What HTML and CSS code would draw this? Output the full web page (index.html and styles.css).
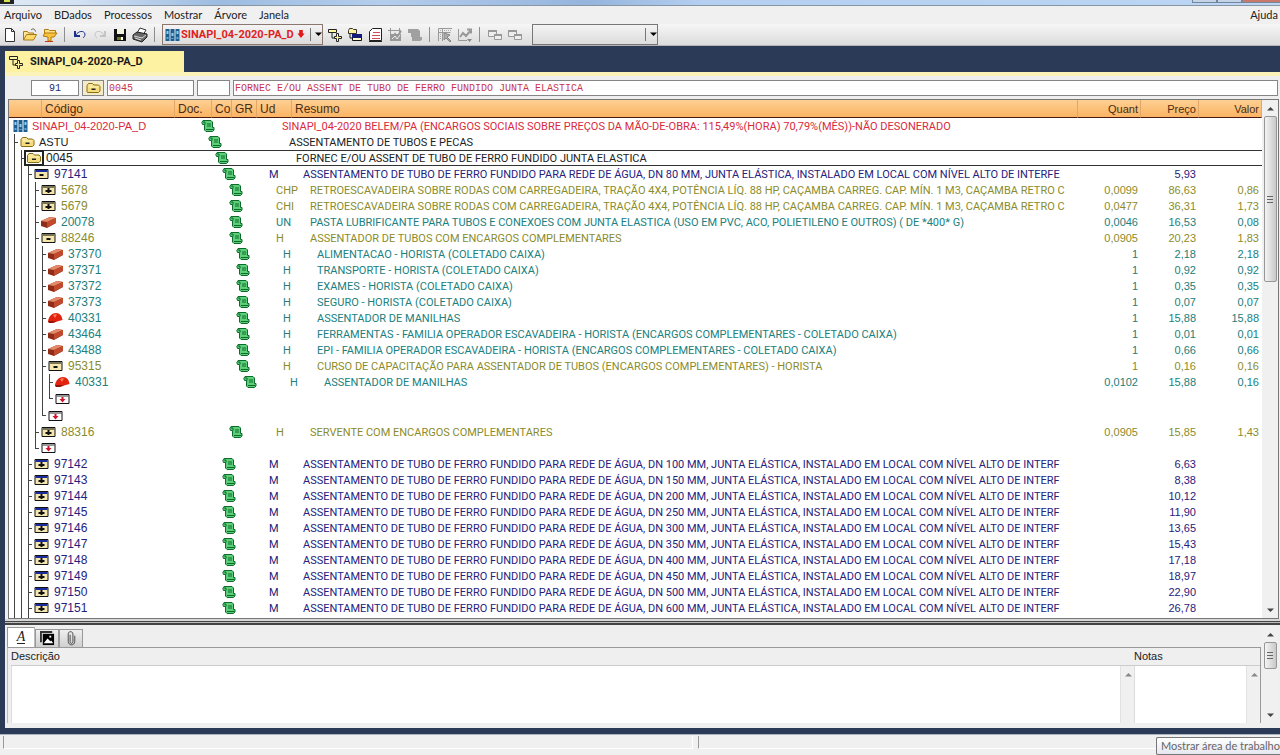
FILE: index.html
```html
<!DOCTYPE html>
<html lang="pt">
<head>
<meta charset="utf-8">
<title>SINAPI_04-2020-PA_D</title>
<link rel="stylesheet" href="styles.css">
</head>
<body>
<svg class="defs" aria-hidden="true">
  <symbol id="books" viewBox="0 0 14 12"><path d="M0 0h4v12H0zM5 0h4v12H5zM10 0h4v12h-4z" fill="#1d5f92"/><path d="M1 2h2v3H1zM6 4h2v3H6zM11 2h2v3h-2z" fill="#8fd0ee"/><path d="M1 8h2v2H1zM6 9h2v1H6zM11 8h2v2h-2z" fill="#5fa9d2"/></symbol>
  <symbol id="folder" viewBox="0 0 14 12"><path d="M.5 10V3.500L2 1.500h4l1.500 1.500H12l1.500 1.500V9L12 10.500H1z" fill="#f5dc7c" stroke="#8a6d14"/><path d="M2 3h4M2 5h10" stroke="#fff6c4"/><path d="M5 6.500h4v1.500H5z" fill="#222"/></symbol>
  <symbol id="boxminus" viewBox="0 0 14 12"><path d="M.5 1.500h13v9H.5z" fill="#f5e6ae" stroke="#111"/><path d="M1 2h12v2H1z" fill="var(--cap)"/><path d="M5 6h4v2H5z" fill="#111"/></symbol>
  <symbol id="boxplus" viewBox="0 0 14 12"><path d="M.5 1.500h13v9H.5z" fill="#f5e6ae" stroke="#111"/><path d="M1 2h12v2H1z" fill="var(--cap)"/><path d="M4 6h2V4h2v2h2v2H8v1H6V8H4z" fill="#111"/></symbol>
  <symbol id="end" viewBox="0 0 14 12"><path d="M.5 1.500h13v9H.5z" fill="#fff" stroke="#111"/><path d="M1 3h12" stroke="#333"/><path d="M6 4h2v2h2L7 9.500 4 6h2z" fill="#d0142c"/></symbol>
  <symbol id="brick" viewBox="0 0 15 12"><path d="M0 5 9 1l6 1v5l-9 5-6-2z" fill="#8d2c17"/><path d="m0 5 9-4 6 1-9 4z" fill="#e58a68"/><path d="m6 6 9-4v5l-9 4.500z" fill="#c14a2c"/></symbol>
  <symbol id="helmet" viewBox="0 0 15 12"><path d="M0 9C1 4 4 1 8 1s6 3 6.500 7L9 9.500 5 11H1z" fill="#e3230f"/><path d="M0 9c2 0 6 0 9 .5L4 11H1z" fill="#8d1508"/><path d="M5 3c1-1 3-1 4-.5L7 6z" fill="#ff7a5c"/></symbol>
  <symbol id="scroll" viewBox="0 0 14 13"><path d="M2 1h8l1.500 1.500V8H13v2.500L11.500 12H5L3.500 10.500V5H1.500L.8 3z" fill="#5ccf78" stroke="#0b6b2c"/><path d="M2 2.500h2V5M5 10h7.500M6 4.500h4M6 6.500h4" fill="none" stroke="#0b6b2c"/></symbol>
  <symbol id="link" viewBox="0 0 16 16"><path d="M1.500 2.500h8v3h-8z" fill="#fff6a0" stroke="#222"/><path d="M5 6v5h4" fill="none" stroke="#222"/><path d="M9.500 6.500h2v3h3v2h-3v3h-2v-3h-2v-2h2z" fill="#fff6a0" stroke="#222"/></symbol>
  <symbol id="windows" viewBox="0 0 16 16"><path d="M1.500 3.500h8v6h-8z" fill="#eee" stroke="#999"/><path d="M1 4h9" stroke="#999" stroke-width="2"/><path d="M7.500 7.500h7v5h-7z" fill="#eee" stroke="#999"/><path d="M7 8h8" stroke="#999" stroke-width="2"/></symbol>
  <symbol id="up" viewBox="0 0 7 5"><path d="M0 4.500h7L3.500 1z" fill="currentColor"/></symbol>
  <symbol id="down" viewBox="0 0 7 5"><path d="M0 .5h7L3.500 4z" fill="currentColor"/></symbol>
</svg>

<header class="titlebar"><svg class="appicon" viewBox="0 0 14 4"><path d="M0 0h14v4H0z" fill="#222"/><path d="M4 0h6v2H4z" fill="#d7e04e"/></svg><span class="winbtns"><i></i><i></i><i class="close"></i></span></header>
<nav class="menu">
  <button>Arquivo</button><button>BDados</button><button>Processos</button><button>Mostrar</button><button>Árvore</button><button>Janela</button><button class="help">Ajuda</button>
</nav>
<div class="toolbar">
  <button aria-label="Novo"><svg viewBox="0 0 16 16"><path d="M3.500 1.500h6l3 3v10h-9z" fill="#fff" stroke="#333"/><path d="M9.500 1.500v3h3" fill="none" stroke="#333"/></svg></button>
  <button aria-label="Abrir"><svg viewBox="0 0 16 16"><path d="M1.500 13V4.500h4l1 1.500h5v2" fill="#fbe69a" stroke="#a87b12"/><path d="m1.500 13 3-5.500h10l-3 5.500z" fill="#fbd96a" stroke="#a87b12"/><path d="M9 3c2-2 4-1 4.500 1.500" fill="none" stroke="#555"/></svg></button>
  <button aria-label="Mover"><svg viewBox="0 0 16 16"><path d="M2.500 8V2.500h4l1 1h6V8z" fill="#fbe38a" stroke="#b5790e"/><path d="m1 9 2-3h12l-3 4H9v4H6v-4z" fill="#f9c43c" stroke="#b5790e"/><path d="M3 14.500h8" stroke="#c23a17"/></svg></button>
  <span class="sep"></span>
  <button aria-label="Desfazer"><svg viewBox="0 0 16 16"><path d="M3 4v5h5" fill="none" stroke="#1d2f8c" stroke-width="2"/><path d="M4 8c2-4 8-5 9-1 0 2-1 3-2 4" fill="none" stroke="#1d2f8c"/></svg></button>
  <button aria-label="Refazer"><svg viewBox="0 0 16 16"><path d="M13 4v5H8" fill="none" stroke="#c4c4c4" stroke-width="2"/><path d="M12 8C10 4 4 3 3 7c0 2 1 3 2 4" fill="none" stroke="#c4c4c4"/></svg></button>
  <button aria-label="Guardar"><svg viewBox="0 0 16 16"><path d="M2 2h12v12H2z" fill="#111"/><path d="M5 2h7v5H5z" fill="#f2f4e0"/><path d="M5 10h6v3H5z" fill="#6d7630"/><path d="M9 10h2v3H9z" fill="#fff"/></svg></button>
  <button aria-label="Imprimir"><svg viewBox="0 0 16 16"><path d="m5 6 3-5 6 2-3 5z" fill="#fff" stroke="#333"/><path d="m1 8 4-3 10 2v3l-5 5-9-3z" fill="#666" stroke="#222"/><path d="m2 9 8 2 4-3M3 11l6 2" fill="none" stroke="#ddd"/></svg></button>
  <span class="sep"></span>
  <div class="combo project"><svg class="ic"><use href="#books"/></svg><select aria-label="Projeto"><option>SINAPI_04-2020-PA_D</option></select><svg class="pin" viewBox="0 0 8 10"><path d="M2 0h4v4h2L4 9 0 4h2z" fill="#e01818"/></svg><svg class="caret"><use href="#down"/></svg></div>
  <button aria-label="Conceito"><svg><use href="#link"/></svg></button>
  <button aria-label="Janelas"><svg viewBox="0 0 16 16"><path d="M1.500 6.500v-3l1-2h3l1 1h3v4z" fill="#fff3a0" stroke="#333"/><path d="M3 7v4h2" fill="none" stroke="#222"/><path d="M5.500 7.500h9v6h-9z" fill="#fffbd0" stroke="#111"/><path d="M5 7h10v4H5z" fill="#141c78"/></svg></button>
  <button aria-label="Texto"><svg viewBox="0 0 16 16"><path d="M5.500 1.500h9v12h-12v-9z" fill="#fff" stroke="#222"/><path d="M6 5.500h7M5 8.500h8M5 11.500h8" stroke="#d04a5a"/><path d="M2 14.500h13" stroke="#222"/></svg></button>
  <button aria-label="Medições"><svg viewBox="0 0 16 16"><path d="M1 3.500h13M3.500 1v13M12.500 1v5" fill="none" stroke="#999"/><path d="M3 7h11v7H3z" fill="#999"/><path d="m5 11 3-4 2 3 4-6" fill="none" stroke="#999" stroke-width="2"/><path d="m5 12 3-3 2 3 3-4" fill="none" stroke="#eee"/></svg></button>
  <button aria-label="Pergaminho"><svg viewBox="0 0 16 16"><path d="M1 2h10l2 2v6h2v3l-2 1H5v-4H4V6H1z" fill="#a0a0a0"/></svg></button>
  <span class="sep"></span>
  <button aria-label="Selecionar"><svg viewBox="0 0 16 16"><path d="M1.500 14V1.500H15M1.500 5.500h12M5.500 2v12" fill="none" stroke="#999"/><path d="M3 3.500h11M3.500 7v6" stroke="#aaa" stroke-dasharray="1 1"/><path d="M7 6v7l2-2 4 4 1-1-4-4 3-2z" fill="#aaa" stroke="#888"/></svg></button>
  <button aria-label="Gráfico"><svg viewBox="0 0 16 16"><path d="M1.500 2v11.500H10" fill="none" stroke="#999"/><path d="m3 10 3-4 3 3 5-6M10 2.500h4v4" fill="none" stroke="#999" stroke-width="2"/><path d="M10 12h5l-2.500 3z" fill="#888"/></svg></button>
  <span class="sep"></span>
  <button aria-label="Copiar janela"><svg><use href="#windows"/></svg></button>
  <button aria-label="Colar janela"><svg><use href="#windows"/></svg></button>
  <div class="combo filter"><select aria-label="Filtro"><option></option></select><svg class="caret"><use href="#down"/></svg></div>
</div>

<main class="desk">
  <div class="doctabs"><button class="doctab"><svg><use href="#link"/></svg>SINAPI_04-2020-PA_D</button></div>
  <section class="doc">
    <form class="fields">
      <input class="f-num" aria-label="Linha" value="91">
      <button type="button" aria-label="Capítulo"><svg class="ic"><use href="#folder"/></svg></button>
      <input class="f-code" aria-label="Código" value="0045">
      <input class="f-unit" aria-label="Unidade" value="">
      <input class="f-desc" aria-label="Resumo" value="FORNEC E/OU ASSENT DE TUBO DE FERRO FUNDIDO JUNTA ELASTICA">
    </form>
    <div class="treepane">
      <div class="treeview">
      <table>
        <colgroup><col class="w-icon"><col class="w-code"><col class="w-doc"><col class="w-co"><col class="w-gr"><col class="w-ud"><col><col class="w-quant"><col class="w-price"><col class="w-value"></colgroup>
        <thead><tr><th></th><th>Código</th><th>Doc.</th><th>Co</th><th>GR</th><th>Ud</th><th>Resumo</th><th class="n">Quant</th><th class="n">Preço</th><th class="n">Valor</th></tr></thead>
        <tbody>
        <tr class="l0 red"><td colspan="2"><div class="node"><svg class="ic"><use href="#books"/></svg><b class="long">SINAPI_04-2020-PA_D</b></div></td><td colspan="3"><svg class="gr"><use href="#scroll"/></svg></td><td colspan="2"><i></i>SINAPI_04-2020 BELEM/PA (ENCARGOS SOCIAIS SOBRE PREÇOS DA MÃO-DE-OBRA: 115,49%(HORA) 70,79%(MÊS))-NÃO DESONERADO</td><td></td><td></td><td></td></tr>
        <tr class="l1 black"><td colspan="2"><div class="node"><svg class="ic"><use href="#folder"/></svg><b class="long">ASTU</b></div></td><td colspan="3"><svg class="gr"><use href="#scroll"/></svg></td><td colspan="2"><i></i>ASSENTAMENTO DE TUBOS E PECAS</td><td></td><td></td><td></td></tr>
        <tr class="l2 black selected"><td colspan="2"><div class="node"><svg class="ic"><use href="#folder"/></svg><b>0045</b></div></td><td colspan="3"><svg class="gr"><use href="#scroll"/></svg></td><td colspan="2"><i></i>FORNEC E/OU ASSENT DE TUBO DE FERRO FUNDIDO JUNTA ELASTICA</td><td></td><td></td><td></td></tr>
        <tr class="l3 blue"><td colspan="2"><div class="node"><svg class="ic"><use href="#boxminus"/></svg><b>97141</b></div></td><td colspan="3"><svg class="gr"><use href="#scroll"/></svg></td><td colspan="2"><i>M</i>ASSENTAMENTO DE TUBO DE FERRO FUNDIDO PARA REDE DE ÁGUA, DN 80 MM, JUNTA ELÁSTICA, INSTALADO EM LOCAL COM NÍVEL ALTO DE INTERFE</td><td></td><td>5,93</td><td></td></tr>
        <tr class="l4 olive"><td colspan="2"><div class="node"><svg class="ic"><use href="#boxplus"/></svg><b>5678</b></div></td><td colspan="3"><svg class="gr"><use href="#scroll"/></svg></td><td colspan="2"><i>CHP</i>RETROESCAVADEIRA SOBRE RODAS COM CARREGADEIRA, TRAÇÃO 4X4, POTÊNCIA LÍQ. 88 HP, CAÇAMBA CARREG. CAP. MÍN. 1 M3, CAÇAMBA RETRO C</td><td>0,0099</td><td>86,63</td><td>0,86</td></tr>
        <tr class="l4 olive"><td colspan="2"><div class="node"><svg class="ic"><use href="#boxplus"/></svg><b>5679</b></div></td><td colspan="3"><svg class="gr"><use href="#scroll"/></svg></td><td colspan="2"><i>CHI</i>RETROESCAVADEIRA SOBRE RODAS COM CARREGADEIRA, TRAÇÃO 4X4, POTÊNCIA LÍQ. 88 HP, CAÇAMBA CARREG. CAP. MÍN. 1 M3, CAÇAMBA RETRO C</td><td>0,0477</td><td>36,31</td><td>1,73</td></tr>
        <tr class="l4 teal"><td colspan="2"><div class="node"><svg class="ic"><use href="#brick"/></svg><b>20078</b></div></td><td colspan="3"><svg class="gr"><use href="#scroll"/></svg></td><td colspan="2"><i>UN</i>PASTA LUBRIFICANTE PARA TUBOS E CONEXOES COM JUNTA ELASTICA (USO EM PVC, ACO, POLIETILENO E OUTROS) ( DE *400* G)</td><td>0,0046</td><td>16,53</td><td>0,08</td></tr>
        <tr class="l4 olive"><td colspan="2"><div class="node"><svg class="ic"><use href="#boxminus"/></svg><b>88246</b></div></td><td colspan="3"><svg class="gr"><use href="#scroll"/></svg></td><td colspan="2"><i>H</i>ASSENTADOR DE TUBOS COM ENCARGOS COMPLEMENTARES</td><td>0,0905</td><td>20,23</td><td>1,83</td></tr>
        <tr class="l5 teal"><td colspan="2"><div class="node"><svg class="ic"><use href="#brick"/></svg><b>37370</b></div></td><td colspan="3"><svg class="gr"><use href="#scroll"/></svg></td><td colspan="2"><i>H</i>ALIMENTACAO - HORISTA (COLETADO CAIXA)</td><td>1</td><td>2,18</td><td>2,18</td></tr>
        <tr class="l5 teal"><td colspan="2"><div class="node"><svg class="ic"><use href="#brick"/></svg><b>37371</b></div></td><td colspan="3"><svg class="gr"><use href="#scroll"/></svg></td><td colspan="2"><i>H</i>TRANSPORTE - HORISTA (COLETADO CAIXA)</td><td>1</td><td>0,92</td><td>0,92</td></tr>
        <tr class="l5 teal"><td colspan="2"><div class="node"><svg class="ic"><use href="#brick"/></svg><b>37372</b></div></td><td colspan="3"><svg class="gr"><use href="#scroll"/></svg></td><td colspan="2"><i>H</i>EXAMES - HORISTA (COLETADO CAIXA)</td><td>1</td><td>0,35</td><td>0,35</td></tr>
        <tr class="l5 teal"><td colspan="2"><div class="node"><svg class="ic"><use href="#brick"/></svg><b>37373</b></div></td><td colspan="3"><svg class="gr"><use href="#scroll"/></svg></td><td colspan="2"><i>H</i>SEGURO - HORISTA (COLETADO CAIXA)</td><td>1</td><td>0,07</td><td>0,07</td></tr>
        <tr class="l5 teal"><td colspan="2"><div class="node"><svg class="ic"><use href="#helmet"/></svg><b>40331</b></div></td><td colspan="3"><svg class="gr"><use href="#scroll"/></svg></td><td colspan="2"><i>H</i>ASSENTADOR DE MANILHAS</td><td>1</td><td>15,88</td><td>15,88</td></tr>
        <tr class="l5 teal"><td colspan="2"><div class="node"><svg class="ic"><use href="#brick"/></svg><b>43464</b></div></td><td colspan="3"><svg class="gr"><use href="#scroll"/></svg></td><td colspan="2"><i>H</i>FERRAMENTAS - FAMILIA OPERADOR ESCAVADEIRA - HORISTA (ENCARGOS COMPLEMENTARES - COLETADO CAIXA)</td><td>1</td><td>0,01</td><td>0,01</td></tr>
        <tr class="l5 teal"><td colspan="2"><div class="node"><svg class="ic"><use href="#brick"/></svg><b>43488</b></div></td><td colspan="3"><svg class="gr"><use href="#scroll"/></svg></td><td colspan="2"><i>H</i>EPI - FAMILIA OPERADOR ESCAVADEIRA - HORISTA (ENCARGOS COMPLEMENTARES - COLETADO CAIXA)</td><td>1</td><td>0,66</td><td>0,66</td></tr>
        <tr class="l5 olive"><td colspan="2"><div class="node"><svg class="ic"><use href="#boxminus"/></svg><b>95315</b></div></td><td colspan="3"><svg class="gr"><use href="#scroll"/></svg></td><td colspan="2"><i>H</i>CURSO DE CAPACITAÇÃO PARA ASSENTADOR DE TUBOS (ENCARGOS COMPLEMENTARES) - HORISTA</td><td>1</td><td>0,16</td><td>0,16</td></tr>
        <tr class="l6 teal"><td colspan="2"><div class="node"><svg class="ic"><use href="#helmet"/></svg><b>40331</b></div></td><td colspan="3"><svg class="gr"><use href="#scroll"/></svg></td><td colspan="2"><i>H</i>ASSENTADOR DE MANILHAS</td><td>0,0102</td><td>15,88</td><td>0,16</td></tr>
        <tr class="l6 last"><td colspan="2"><div class="node"><svg class="ic"><use href="#end"/></svg></div></td><td colspan="8"></td></tr>
        <tr class="l5 last"><td colspan="2"><div class="node"><svg class="ic"><use href="#end"/></svg></div></td><td colspan="8"></td></tr>
        <tr class="l4 olive"><td colspan="2"><div class="node"><svg class="ic"><use href="#boxplus"/></svg><b>88316</b></div></td><td colspan="3"><svg class="gr"><use href="#scroll"/></svg></td><td colspan="2"><i>H</i>SERVENTE COM ENCARGOS COMPLEMENTARES</td><td>0,0905</td><td>15,85</td><td>1,43</td></tr>
        <tr class="l4 last"><td colspan="2"><div class="node"><svg class="ic"><use href="#end"/></svg></div></td><td colspan="8"></td></tr>
        <tr class="l3 blue"><td colspan="2"><div class="node"><svg class="ic"><use href="#boxplus"/></svg><b>97142</b></div></td><td colspan="3"><svg class="gr"><use href="#scroll"/></svg></td><td colspan="2"><i>M</i>ASSENTAMENTO DE TUBO DE FERRO FUNDIDO PARA REDE DE ÁGUA, DN 100 MM, JUNTA ELÁSTICA, INSTALADO EM LOCAL COM NÍVEL ALTO DE INTERF</td><td></td><td>6,63</td><td></td></tr>
        <tr class="l3 blue"><td colspan="2"><div class="node"><svg class="ic"><use href="#boxplus"/></svg><b>97143</b></div></td><td colspan="3"><svg class="gr"><use href="#scroll"/></svg></td><td colspan="2"><i>M</i>ASSENTAMENTO DE TUBO DE FERRO FUNDIDO PARA REDE DE ÁGUA, DN 150 MM, JUNTA ELÁSTICA, INSTALADO EM LOCAL COM NÍVEL ALTO DE INTERF</td><td></td><td>8,38</td><td></td></tr>
        <tr class="l3 blue"><td colspan="2"><div class="node"><svg class="ic"><use href="#boxplus"/></svg><b>97144</b></div></td><td colspan="3"><svg class="gr"><use href="#scroll"/></svg></td><td colspan="2"><i>M</i>ASSENTAMENTO DE TUBO DE FERRO FUNDIDO PARA REDE DE ÁGUA, DN 200 MM, JUNTA ELÁSTICA, INSTALADO EM LOCAL COM NÍVEL ALTO DE INTERF</td><td></td><td>10,12</td><td></td></tr>
        <tr class="l3 blue"><td colspan="2"><div class="node"><svg class="ic"><use href="#boxplus"/></svg><b>97145</b></div></td><td colspan="3"><svg class="gr"><use href="#scroll"/></svg></td><td colspan="2"><i>M</i>ASSENTAMENTO DE TUBO DE FERRO FUNDIDO PARA REDE DE ÁGUA, DN 250 MM, JUNTA ELÁSTICA, INSTALADO EM LOCAL COM NÍVEL ALTO DE INTERF</td><td></td><td>11,90</td><td></td></tr>
        <tr class="l3 blue"><td colspan="2"><div class="node"><svg class="ic"><use href="#boxplus"/></svg><b>97146</b></div></td><td colspan="3"><svg class="gr"><use href="#scroll"/></svg></td><td colspan="2"><i>M</i>ASSENTAMENTO DE TUBO DE FERRO FUNDIDO PARA REDE DE ÁGUA, DN 300 MM, JUNTA ELÁSTICA, INSTALADO EM LOCAL COM NÍVEL ALTO DE INTERF</td><td></td><td>13,65</td><td></td></tr>
        <tr class="l3 blue"><td colspan="2"><div class="node"><svg class="ic"><use href="#boxplus"/></svg><b>97147</b></div></td><td colspan="3"><svg class="gr"><use href="#scroll"/></svg></td><td colspan="2"><i>M</i>ASSENTAMENTO DE TUBO DE FERRO FUNDIDO PARA REDE DE ÁGUA, DN 350 MM, JUNTA ELÁSTICA, INSTALADO EM LOCAL COM NÍVEL ALTO DE INTERF</td><td></td><td>15,43</td><td></td></tr>
        <tr class="l3 blue"><td colspan="2"><div class="node"><svg class="ic"><use href="#boxplus"/></svg><b>97148</b></div></td><td colspan="3"><svg class="gr"><use href="#scroll"/></svg></td><td colspan="2"><i>M</i>ASSENTAMENTO DE TUBO DE FERRO FUNDIDO PARA REDE DE ÁGUA, DN 400 MM, JUNTA ELÁSTICA, INSTALADO EM LOCAL COM NÍVEL ALTO DE INTERF</td><td></td><td>17,18</td><td></td></tr>
        <tr class="l3 blue"><td colspan="2"><div class="node"><svg class="ic"><use href="#boxplus"/></svg><b>97149</b></div></td><td colspan="3"><svg class="gr"><use href="#scroll"/></svg></td><td colspan="2"><i>M</i>ASSENTAMENTO DE TUBO DE FERRO FUNDIDO PARA REDE DE ÁGUA, DN 450 MM, JUNTA ELÁSTICA, INSTALADO EM LOCAL COM NÍVEL ALTO DE INTERF</td><td></td><td>18,97</td><td></td></tr>
        <tr class="l3 blue"><td colspan="2"><div class="node"><svg class="ic"><use href="#boxplus"/></svg><b>97150</b></div></td><td colspan="3"><svg class="gr"><use href="#scroll"/></svg></td><td colspan="2"><i>M</i>ASSENTAMENTO DE TUBO DE FERRO FUNDIDO PARA REDE DE ÁGUA, DN 500 MM, JUNTA ELÁSTICA, INSTALADO EM LOCAL COM NÍVEL ALTO DE INTERF</td><td></td><td>22,90</td><td></td></tr>
        <tr class="l3 blue"><td colspan="2"><div class="node"><svg class="ic"><use href="#boxplus"/></svg><b>97151</b></div></td><td colspan="3"><svg class="gr"><use href="#scroll"/></svg></td><td colspan="2"><i>M</i>ASSENTAMENTO DE TUBO DE FERRO FUNDIDO PARA REDE DE ÁGUA, DN 600 MM, JUNTA ELÁSTICA, INSTALADO EM LOCAL COM NÍVEL ALTO DE INTERF</td><td></td><td>26,78</td><td></td></tr>
        <tr class="l3 blue"><td colspan="2"><div class="node"></div></td><td colspan="3"><svg class="gr"><use href="#scroll"/></svg></td><td colspan="2"></td><td></td><td></td><td></td></tr>
        </tbody>
      </table>
      </div>
      <div class="scrollbar"><svg><use href="#up"/></svg><span class="thumb"></span><svg class="bottom"><use href="#down"/></svg></div>
    </div>
    <div class="splitter"></div>
    <div class="notes">
      <div class="notesbody">
        <div class="tabs">
          <button class="active" aria-label="Texto"><span>A</span></button>
          <button aria-label="Imagem"><svg viewBox="0 0 16 16"><path d="M1 12V1h12" fill="none" stroke="#333" stroke-width="2"/><path d="M3 3h12v12H3z" fill="#000"/><path d="m4 13 4-5 3 3 1-1 2 3z" fill="#fff"/><path d="M10 5h2v2h-2z" fill="#fff"/></svg></button>
          <button aria-label="Anexo"><svg viewBox="0 0 16 16"><path d="M6.500 4v7c0 3 3 3 3 0V3c0-3-5-3-5 0v8c0 5 7 5 7 0V5" fill="none" stroke="#444"/></svg></button>
        </div>
        <div class="areas">
          <div class="desc"><label for="descricao">Descrição</label><div class="box"><textarea id="descricao"></textarea><span class="track"><svg><use href="#up"/></svg></span></div></div>
          <div class="memo"><label for="notas">Notas</label><div class="box"><textarea id="notas"></textarea><span class="track"><svg><use href="#up"/></svg></span></div></div>
        </div>
      </div>
      <div class="scrollbar small"><svg><use href="#up"/></svg><span class="thumb"></span><svg class="bottom"><use href="#down"/></svg></div>
    </div>
  </section>
</main>
<footer class="status"><span class="s1"></span><span class="s2"></span><div class="tip">Mostrar área de trabalho</div></footer>
</body>
</html>
```
FILE: styles.css
```css
* { box-sizing: border-box; }
html, body { height: 100%; }
body { margin: 0; display: flex; flex-direction: column; overflow: hidden; background: #f0f0f0; color: #1c1c1c; font: 12px/16px "Liberation Sans", Arial, sans-serif; }
button { border: 0; padding: 0; background: none; color: inherit; font: inherit; }
svg { display: block; flex: none; }
.defs { position: absolute; width: 0; height: 0; }
.ic { width: 15px; height: 12px; }

.titlebar { flex: none; height: 6px; display: flex; justify-content: space-between; background: linear-gradient(90deg, #dfe9f5, #d3e2f4 6%, #9dbce0 17%, #b4cdec 30%, #96b4dc 46%, #b4cff0 55%, #bcd6f4); border-bottom: 1px solid #8795a5; }
.appicon { width: 14px; height: 4px; }
.winbtns { display: flex; height: 3px; margin-right: -8px; }
.winbtns i { width: 25px; border: 1px solid #75869b; border-top: 0; background: #c3d3e8; }
.winbtns .close { width: 46px; background: #c9786a; }

.menu { flex: none; height: 18px; display: flex; gap: 12px; padding: 0 2px 0 4px; font: 11px/18px Lato, "Open Sans", sans-serif; color: #222; }
.menu .help { margin-left: auto; }

.toolbar { flex: none; height: 22px; display: flex; align-items: center; gap: 4px; padding-left: 2px; background: linear-gradient(#f6f6f6, #dcdcdc); border-bottom: 1px solid #b4b4b4; }
.toolbar button, .toolbar button svg { width: 16px; height: 16px; }
.sep { width: 1px; height: 15px; margin: 0 3px 0 2px; background: #8e8e8e; }
.combo { display: flex; align-items: center; height: 21px; border: 1px solid #777; background: linear-gradient(#f4f4f4, #dcdcdc); }
.combo select { flex: 1; min-width: 0; appearance: none; border: 0; padding: 0; background: none; color: #e01f1f; font: bold 11px/16px Roboto, sans-serif; }
.combo .caret { width: 12px; height: 13px; padding: 4px 0 4px 4px; border-left: 1px solid #777; color: #000; }
.project { width: 161px; padding-left: 2px; border-color: #8c7770; }
.project select { margin-left: 1px; }
.pin { width: 8px; height: 9px; margin: 0 5px 0 0; }
.filter { width: 126px; margin-left: 5px; }

.desk { flex: 1; min-height: 0; display: flex; flex-direction: column; padding: 5px 0 6px 5px; background: #2b3a56; }
.doctabs { flex: none; height: 21px; }
.doctab { display: flex; align-items: center; gap: 6px; width: 179px; height: 21px; padding-left: 3px; background: #fdf1a2; font: bold 11px/21px Roboto, sans-serif; color: #1c1c1c; }
.doctab svg { width: 16px; height: 16px; }
.doc { flex: 1; min-height: 0; display: flex; flex-direction: column; border-top: 4px solid #fbf3b8; background: #efefef; }

.fields { flex: none; display: flex; gap: 3px; height: 23px; padding: 4px 2px 3px 26px; }
.fields input, .fields button { height: 16px; border: 1px solid #858585; padding: 0 1px; background: #fff; color: #c8364a; font: 10px/14px "Liberation Mono", "Courier New", monospace; }
.fields .f-num { width: 48px; text-align: center; color: #28286e; }
.fields button { width: 22px; padding-left: 3px; background: #f4ecc8; }
.fields .f-code { width: 87px; }
.fields .f-unit { width: 33px; }
.fields .f-desc { flex: 1; min-width: 0; }

.treepane { flex: 1; min-height: 0; display: flex; margin: 0 1px 0 3px; border: 1px solid #777; background: #fff; }
.treeview { flex: 1; min-width: 0; overflow: hidden; }
table { width: 100%; table-layout: fixed; border-collapse: separate; border-spacing: 0; }
.w-icon { width: 33px; } .w-code { width: 133px; } .w-doc { width: 37px; } .w-co { width: 20px; } .w-gr { width: 25px; }
.w-ud { width: 35px; } .w-quant { width: 63px; } .w-price { width: 58px; } .w-value { width: 63px; }
th { height: 18px; padding: 0 0 0 3px; overflow: hidden; text-align: left; font-weight: normal; line-height: 16px; white-space: nowrap; color: #4a2d12; background: linear-gradient(#fdd092, #fbb364); border-right: 1px solid #e2a665; border-bottom: 1px solid #4a1a10; }
th.n { text-align: right; padding-right: 2px; font-size: 11px; }
td { height: 16px; padding: 0; font: 11px/16px Roboto, sans-serif; white-space: nowrap; overflow: hidden; }
td:nth-child(3) { padding-top: 1px; line-height: 15px; }
td:nth-child(n+4) { font-family: "Liberation Sans", Arial, sans-serif; text-align: right; padding-right: 3px; }

/* --n is the depth of the row; every level moves the row 7px to the right */
.l0 { --n: 0; } .l1 { --n: 1; } .l2 { --n: 2; } .l3 { --n: 3; } .l4 { --n: 4; } .l5 { --n: 5; } .l6 { --n: 6; }
.node {
  --line: repeating-linear-gradient(90deg, #444 0 1px, transparent 1px 7px);
  --stub: linear-gradient(#444, #444);
  display: flex; align-items: center; height: 16px; padding-left: calc(4px + var(--n) * 7px);
  background: var(--line) 5px 0 / calc(var(--n) * 7px) 100% no-repeat, var(--stub) calc(var(--n) * 7px - 2px) 8px / 4px 1px no-repeat;
}
.l0 .node { background: none; }
.last .node {
  background: var(--line) 5px 0 / calc(var(--n) * 7px - 7px) 100% no-repeat, var(--stub) calc(var(--n) * 7px - 2px) 8px / 4px 1px no-repeat, var(--stub) calc(var(--n) * 7px - 2px) 0 / 1px 8px no-repeat;
}
.l5.last .node, .l6.last .node { height: 17px; }
.node b { flex: 1; padding-left: 5px; font: 12px/16px "Liberation Sans", Arial, sans-serif; }
.node .long { padding-left: 4px; font-size: 11px; }
.gr { width: 14px; height: 14px; margin-left: calc(26px + var(--n) * 7px); }
td i { display: inline-block; width: calc(25px + var(--n) * 7px); padding-left: max(0px, var(--n) * 7px - 9px); font-style: normal; }
.red { color: #d92a3c; } .black { color: #222; } .blue { color: #26217c; --cap: #1b2a9c; } .olive { color: #8a8c2c; --cap: #77745a; } .teal { color: #20807e; }
.selected td:nth-child(n+2), .selected b { box-shadow: inset 0 1px #333, inset 0 -1px #333; }
.selected .ic { width: 20px; height: 16px; margin-left: -3px; border: 2px solid #222; background: #fff; }
.selected b { padding-left: 2px; }

.scrollbar { flex: none; width: 16px; display: flex; flex-direction: column; align-items: center; background: #f0f0f0; color: #444; }
.scrollbar svg { width: 7px; height: 5px; margin: 6px 0 5px; }
.scrollbar .bottom { margin: auto 0 5px; }
.thumb { display: grid; place-items: center; width: 13px; height: 166px; border: 1px solid #979797; border-radius: 2px; background: linear-gradient(90deg, #f4f4f4, #c8c8c8); }
.thumb::after { content: ""; width: 6px; height: 7px; background: repeating-linear-gradient(#666 0 1px, transparent 1px 3px); }
.small .thumb { height: 27px; }

.splitter { flex: none; height: 6px; border-top: 2px solid #d8d8d8; border-bottom: 2px solid #444; background: linear-gradient(#444 1px, #bbb 1px); }
.notes { flex: none; height: 103px; display: flex; padding: 1px 2px 5px 2px; }
.notesbody { flex: 1; min-width: 0; display: flex; flex-direction: column; }
.notes .scrollbar { margin-left: 1px; }
.tabs { display: flex; align-items: flex-end; height: 21px; padding-top: 1px; }
.tabs button { display: grid; place-items: center; width: 24px; height: 18px; border: 1px solid #999; border-bottom: 0; background: linear-gradient(#efefef, #cfcfcf); }
.tabs .active { width: 28px; height: 20px; background: #fff; border-right-color: #bbb; }
.tabs .active span { border-bottom: 1px solid #222; font: italic 14px/12px "Liberation Serif", serif; }
.tabs svg { width: 15px; height: 15px; }
.areas { flex: 1; min-height: 0; display: flex; border: 1px solid #999; border-bottom: 0; border-left-color: #bbb; }
.desc, .memo { display: flex; flex-direction: column; }
.desc { flex: 1; padding-left: 3px; }
.memo { width: 126px; }
.areas label { height: 17px; font-size: 11px; line-height: 17px; }
.box { flex: 1; min-height: 0; display: flex; border-top: 1px solid #ccc; }
.box textarea { flex: 1; min-width: 0; border: 0; border-left: 1px solid #ddd; padding: 2px; resize: none; background: #fff; font: inherit; }
.track { width: 14px; padding: 6px 0 0 4px; border-left: 1px solid #e2e2e2; background: #f0f0f0; color: #888; }
.track svg { width: 7px; height: 5px; }

.status { flex: none; display: flex; gap: 5px; height: 21px; padding: 1px 0 6px 3px; border-top: 1px solid #aab4c0; }
.status span { border-left: 1px solid #999; border-bottom: 1px solid #fff; }
.s1 { flex: 0 0 54%; border-right: 1px solid #fff; }
.s2 { flex: 1; }
.tip { position: absolute; right: 0; bottom: 0; padding: 0 0 0 4px; height: 18px; border: 1px solid #767676; border-right: 0; border-radius: 2px 0 0 2px; background: linear-gradient(#fff, #e6e8f0); color: #666; font: 11px/16px Lato, "Open Sans", sans-serif; white-space: nowrap; }
```
